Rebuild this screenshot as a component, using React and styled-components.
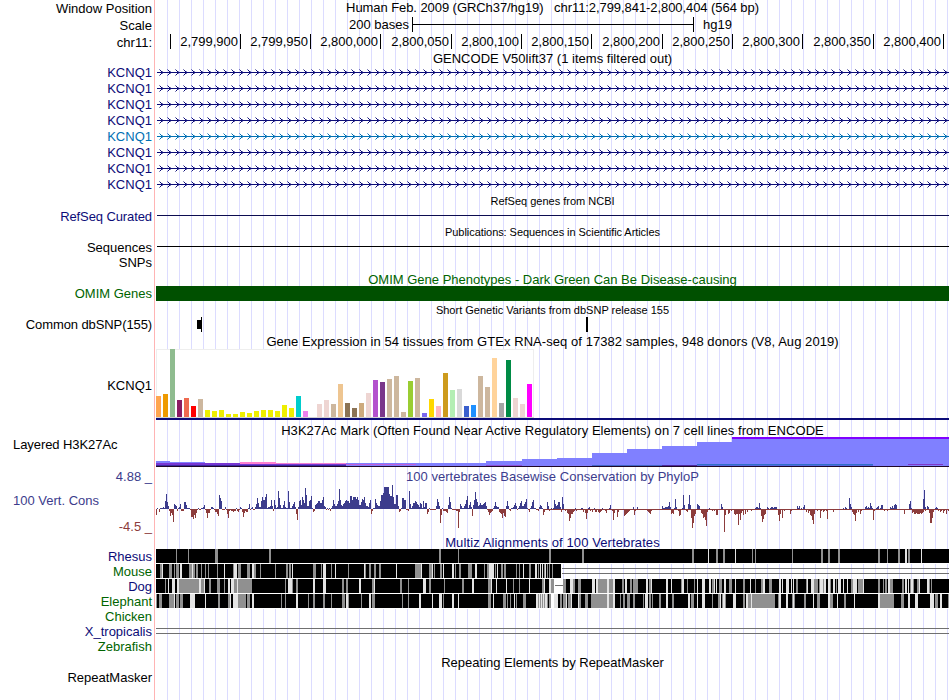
import React from 'react';
import styled, { createGlobalStyle } from 'styled-components';

const NAVY = '#0c0c78';
const GREEN = '#006400';
const INDIGO = '#3c3c8c';
const MAROON = '#8c3c3c';

const GlobalStyle = createGlobalStyle`
  body {
    margin: 0;
    background: #fff;
    overflow: hidden;
  }
`;

const Browser = styled.main`
  width: 950px;
  height: 700px;
  display: flex;
  flex-direction: column;
  overflow: hidden;
  font-family: 'Liberation Sans', Arial, sans-serif;
  font-size: 13px;
  line-height: 15px;
  color: #000;
  white-space: pre;
  background:
    linear-gradient(#ffb4b4, #ffb4b4) 154px 0 / 1px 100% no-repeat,
    repeating-linear-gradient(90deg, #dcdcff 0 1px, transparent 1px 12px) 167px 0 / 782px 100% no-repeat,
    #fff;
`;

const TrackRow = styled.section`
  flex: none;
  display: grid;
  grid-template-columns: 152px 793px;
  column-gap: 4px;
  height: ${(p) => p.$h}px;
`;

const Label = styled.div`
  display: flex;
  align-items: center;
  justify-content: ${(p) => (p.$left ? 'flex-start' : 'flex-end')};
  padding: ${(p) => p.$pad || '0'};
  height: ${(p) => (p.$h ? `${p.$h}px` : '100%')};
  box-sizing: border-box;
  letter-spacing: ${(p) => p.$track || 0}px;
  color: ${(p) => p.$color || '#000'};
`;

const Title = styled.div`
  display: flex;
  align-items: center;
  justify-content: center;
  padding-top: ${(p) => p.$drop || 0}px;
  padding-bottom: ${(p) => p.$lift || 0}px;
  font-size: ${(p) => (p.$small ? 11 : 13)}px;
  letter-spacing: ${(p) => p.$track || 0}px;
  color: ${(p) => p.$color || '#000'};
`;

const Plot = styled.svg`
  display: block;
  width: 793px;
  height: ${(p) => p.$h}px;
  shape-rendering: crispEdges;
`;

const ScaleBar = styled.div`
  display: flex;
  align-items: center;
  padding-left: 193px;
`;

const ScaleName = styled.span`
  width: 59px;
`;

const ScaleRule = styled.div`
  display: flex;
  align-items: center;
  width: 280px;
  height: 15px;
  margin: 0 9px 0 4px;
  border: solid #000;
  border-width: 0 1px;
  &::before {
    content: '';
    flex: 1;
    height: 1px;
    background: #000;
  }
`;

const Ruler = styled.div`
  display: grid;
  grid-template-columns: 15px 70px 70px 70px 71px 70px 70px 71px 70px 70px 71px 70px;
  padding: 1px 0;
`;

const RulerCell = styled.div`
  display: flex;
  align-items: center;
  justify-content: flex-end;
  padding-right: 2px;
  border-right: 1px solid #000;
`;

const Band = styled.div`
  height: 15px;
  background: #005000;
`;

const POSITIONS = ['', '2,799,900', '2,799,950', '2,800,000', '2,800,050', '2,800,100', '2,800,150', '2,800,200', '2,800,250', '2,800,300', '2,800,350', '2,800,400'];

/* Plots share genomic pixel coordinates; column 156 is the left edge. */
const X0 = 156;

const GENES = [NAVY, NAVY, NAVY, NAVY, '#0070b4', NAVY, NAVY, NAVY];

const GTEX = [
  ['#ffa54f', 21], ['#ee9a00', 23], ['#8fbc8f', 68], ['#8b1c62', 17], ['#ee6a50', 19], ['#ff0000', 11], ['#cdb79e', 18],
  ['#eeee00', 7], ['#eeee00', 6], ['#eeee00', 7], ['#eeee00', 3], ['#eeee00', 3], ['#eeee00', 5], ['#eeee00', 4],
  ['#eeee00', 6], ['#eeee00', 7], ['#eeee00', 7], ['#eeee00', 6], ['#eeee00', 12], ['#eeee00', 9], ['#00cdcd', 21],
  ['#ee82ee', 6], ['#9ac0cd', 0], ['#eed5d2', 13], ['#eed5d2', 17], ['#cdb79e', 13], ['#eec591', 33], ['#8b7355', 14],
  ['#8b7355', 9], ['#cdaa7d', 14], ['#eed5d2', 24], ['#b452cd', 37], ['#7a378b', 35], ['#cdb79e', 38], ['#cdb79e', 41],
  ['#cdb79e', 5], ['#9acd32', 36], ['#cdb79e', 39], ['#7a67ee', 4], ['#ffd700', 18], ['#ffb6c1', 11], ['#cd9b1d', 44],
  ['#b4eeb4', 27], ['#d9d9d9', 28], ['#3a5fcd', 11], ['#1e90ff', 12], ['#cdb79e', 41], ['#cdb79e', 30], ['#ffd39b', 59],
  ['#a6a6a6', 14], ['#008b45', 57], ['#eed5d2', 19], ['#eed5d2', 13], ['#ff00ff', 33],
];

/* [x, y, width, height, colour], y measured from the top of the signal. */
const H3K27AC = [
  [156, 24, 14, 5, '#8080ff'], [170, 25, 35, 4, '#8080ff'],
  [156, 26, 84, 2, '#7837d2'], [240, 27, 106, 2, '#7837d2'],
  [240, 25, 36, 2, '#ff80d0'], [276, 26, 70, 1, '#f080d0'], [346, 27, 70, 1, '#c060d8'],
  [346, 26, 140, 1, '#8080ff'], [346, 28, 140, 1, '#8080ff'], [416, 27, 70, 1, '#8080ff'],
  [156, 28, 190, 1, '#3c28a0'],
  [486, 24, 36, 5, '#8080ff'], [522, 22, 35, 7, '#8080ff'], [557, 21, 35, 8, '#8080ff'],
  [592, 16, 35, 13, '#8080ff'], [627, 12, 35, 17, '#8080ff'], [662, 9, 35, 20, '#8080ff'],
  [697, 5, 35, 24, '#8080ff'], [732, 0, 217, 29, '#8080ff'], [732, 0, 217, 2, '#8000ff'],
  [486, 28, 36, 1, '#8c50d8'], [592, 28, 70, 1, '#4064c8'], [662, 28, 35, 1, '#4c289c'],
  [697, 27, 176, 1, '#3070c8'], [697, 28, 176, 1, '#5068e0'], [908, 27, 35, 1, '#8038c8'],
  [156, 29, 793, 1, '#200828'],
];

/* Conservation score runs: "start: heights", signed, one value per column. */
const PHYLOP = `
156: -6 1 0 -3 1 1 1 2 1 8 15 7 3 -2 -7 -4 -6 -13 5 4 3 -2 1 2 5 -2 -2 -2 7 7 4 1 1 1 -1 -8 -8 -10 -6 -9
196: -4 -1 1 -1 -1 1 1 2 4 -1 -4 -9 -4 -4 -1 2 2 1 -1 -3 -3 -5 -7 14 11 8 -1 -1 -1 2 -1 -5 -9 -2 -1 -2 -2 -3 -2 -2
236: 1 -2 -3 -1 2 1 -3 -8 -4 -2 -3 -3 1 5 -1 1 2 -1 -1 2 5 11 6 2 2 8 12 9 9 12 15 1 2 2 3 9
272: 3 -2 9 4 1 2 18 11 4 1 1 4 8 2 1 1 18 7 1 1 3 5 7 2 -5 -11 2 8 9 4 12 9 6 21 14 3
308: 3 8 9 13 1 -3 -2 4 5 6 8 8 6 6 9 12 3 2 -1 1 -1 1 -2 1 3 9 5 3 3 5 8 20 9 4 3 5 6 8 9 8
348: 8 6 13 13 9 12 12 12 10 12 9 4 4 7 10 9 12 6 3 3 2 6 9 -5 -2 1 1 10 6 4 3 3 8 14 14 16 22 22 22 22
388: 22 15 13 13 24 12 5 5 14 14 3 -3 -2 1 11 11 9 9 -1 -1 -2 18 5 1 3 6 6 8 7 5 4 2 6 5 1 8
424: 2 6 6 -5 -3 1 -1 -1 -1 -1 -1 -1 3 10 7 3 -14 -6 1 -2 -2 -2 -3 -4 4 12 7 1 -1 -1 -1 -1 -2 -2 -19 -3
460: 5 3 1 1 3 5 9 13 1 4 7 2 -7 4 9 17 10 7 3 4 6 4 4 5 6 7 3 -1 -3 -6 -4 -3 -2 1 3 7
496: 3 2 2 -3 -4 -5 -9 -4 -7 -8 3 8 3 -1 -2 1 1 2 4 6 3 -1 1 3 6 8 3 3 5 7 10 1 -1 -3 1 3
532: 7 9 1 1 -1 -1 -2 2 4 3 1 -6 -3 -1 -1 7 3 -2 -1 1 0 1 9 5 3 4 7 7 2 -3 12 5 0 -2 0 -4
568: -5 -12 -9 -5 -5 -3 -2 1 -2 -1 -1 0 -1 1 1 -3 -1 -4 -10 -4 1 2 -2 -1 -3 -1 1 -3 -3 -1 -3 -4 -3 -2 1 -1
604: -1 -2 -4 -1 0 1 4 -1 -2 -11 -4 -1 -1 -8 -3 0 -1 -1 -1 0 -7 -6 -5 -4 -3 -2 -1 0 -1 2 -6 -2 0 2 -1 -1
640: -1 -1 -1 -1 -1 -1 -1 -2 -3 -4 -5 -2 0 -1 -1 0 -1 -1 -1 -1 -1 0 3 1 1 2 2 2 3 7 2 -5 -4 -5 1 10
676: 2 0 -2 -7 -6 -1 1 14 4 -1 -2 -3 5 14 4 -9 -19 -14 -7 -5 0 5 4 3 -1 -4 -5 -9 -8 -11 -17 -3 0 1 -1 -1
712: -2 -1 -2 -1 -6 -6 -1 0 -1 5 2 -1 -23 -6 -1 -1 -5 -4 -1 -2 -1 -1 -5 -6 -5 -5 -16 -5 -11 -4 -2 -6 0 -5 -1 -3
748: -1 0 -1 -2 -1 -1 -1 1 2 2 1 6 1 -7 -13 -10 -6 -5 0 2 1 0 1 2 2 1 2 2 2 -1 -6 -12 -5 0 -9 -1
784: -2 -1 -1 0 -1 -1 -5 -2 -1 0 -1 -1 0 3 1 3 0 1 0 2 4 -1 -3 -1 -4 -2 -6 -7 -11 -15 -5 -1 0 -2 -1 -1
820: -9 -2 -1 -3 -2 -1 -2 -10 -1 0 -1 -1 -1 -3 -1 -1 -1 -1 0 -1 -1 -1 -1 1 -1 2 1 -1 0 11 5 2 -3 -5 -6 -12
856: -4 -1 -3 -1 -5 -2 -1 0 -1 2 3 1 2 1 6 3 1 -11 -2 -1 1 2 3 -1 1 4 4 0 -2 -1 0 -2 -1 0 2 1
892: 3 1 4 5 4 -1 -1 -1 -1 -1 -1 0 -5 -1 -1 0 -1 5 8 1 -4 -3 -5 -5 -4 -5 -5 -5 -4 -5 -4 -3 0 -2
923: 10 19 2 -1 3 2 -4 -14 -14 -9 -3 -1 1 2 1 -2 -1 -3 -2 -1 -4 -2 -1 -5 -1 -2
`;

const scores = PHYLOP.trim()
  .split('\n')
  .flatMap((line) => {
    const [start, values] = line.split(': ');
    return values.split(' ').map((v, i) => [+start + i, +v]);
  });

const barsPath = (list) => list.map(([x, v]) => `M${x} 24v${-v}h1v${v}z`).join('');

/* Mismatch stripes: position, shade (g grey, l light, w gap, k match), width. */
const SHADES = { g: '#909090', l: '#e4e4e4', w: '#ffffff', k: '#000000' };
const RHESUS = '176g1 188g1 215g3 269g2 439g2 458g1 549g2 582g2 692g2 708l1 716g2 723g2 735l1 752g1 755g1 792g1 821g2 828g2 838g2 878g2 887g1 898g2 905l2 908g2 921l1';
const MOUSE = '160g2 162l1 169g3 174g1 176g3 180l2 189g3 192l1 193g2 196g2 201g1 205g1 208g1 217g1 224l1 233g1 234l3 238g3 247g3 252l2 254g2 260g1 275g1 286g2 289g2 292l1 313g3 321g1 323l3 331g1 335l1 348g1 364l1 365g1 369g2 374g2 379g2 396l1 415g6 421l1 429g3 432l1 434g1 440g2 443l1 452l2 455g1 459g2 468g4 475l2 484g1 487g2 489l5 495g1 497l1 501g2 504g2 516g1 519g1 523l1 529g2 535l2 538g1 540l1 542l1 544g1 545l1 547g1 549g1 552g1';
const DOG = '165g1 168l1 172l3 177l2 179g20 199l2 201g3 204l1 209g2 217g3 224g1 228l2 231l3 234g3 237l1 238g14 285g1 288l4 292g1 296g2 313l2 323l3 342g2 346g2 359l2 372g2 374l1 400g2 408g1 423l3 429g2 444g1 462g2 472l2 488g3 491l1 496l1 506l1 513g1 519g1 529l1 542g2 544l1 549l2 551g3 554w9 563g3 570l3 573g2 578g3 592l3 596l2 598g9 607l2 609g4 613l2 622g2 625l2 630g2 633g5 646l2 649g2 651l1 666l2 671l1 681g1 682l2 687g1 694g1 697l1 702l3 709l2 712g2 714l1 716l1 719g3 724l2 729g3 735l1 743g2 750l1 755g1 761g2 763l2 769g3 779l2 782l1 786l3 791l1 793l1 796g2 806g1 807l1 811l3 814g4 819g1 820l3 823g1 824l2 828l2 830g1 833l2 836g1 838l3 843l1 847l1 851g2 853l4 858g5 863l1 878g2 883g1 885g2 888l2 890g3 902g2 905l2 908l1 910g1 911l2 913g1 917g2 919l1 927l2 929g1 931g1';
const ELEPHANT = '156g1 159g3 169g5 174l1 176g3 180g3 190l5 205l1 218g2 228g2 230l1 233l5 238g8 247g3 252l2 281g1 285g1 296l2 308g1 313g2 323g2 331g1 342g3 346l2 348g1 361g1 369l2 372g3 402g1 408g1 419l2 432l1 439l3 443g1 452l2 458l1 488g3 493l1 503g3 507g1 510g1 514l1 516g1 523g3 536g12 536l2 539l1 541l1 543l1 545l2 549g2 551w3 554l4 560g2 563g4 566l1 568g3 571l1 578l1 579g2 585g3 591g16 607l2 609g4 613l2 620g1 623g2 627g3 633g2 643g1 645l3 649g2 652g1 659g2 666l2 672g2 688l2 691g3 697l1 702l3 712g1 718g2 720l1 722g1 723l2 725g1 733l3 743g2 746l2 748g3 751l1 752g23 778g1 779l2 786l2 792g1 793l1 794g1 804g2 813l1 817g3 828l2 830g3 837l1 844g2 854l1 878l2 880g14 901g3 908l2 915l3 930l4 935g3 940l2 948g1';

const parseStripes = (text) => text.split(' ').map((s) => s.match(/(\d+)([glwk])(\d+)/).slice(1));

const TrackPlot = ({ h, children }) => (
  <Plot $h={h} viewBox={`${X0} 0 793 ${h}`}>
    {children}
  </Plot>
);

const TitleRow = ({ h, label, labelColor, children, ...rest }) => (
  <TrackRow $h={h}>
    <Label $color={labelColor}>{label}</Label>
    <Title {...rest}>{children}</Title>
  </TrackRow>
);

const chevrons = Array.from({ length: 99 }, (_, i) => 162 + i * 8);

const GeneTrack = ({ color }) => (
  <TrackRow $h={16}>
    <Label $color={color} $pad="0 0 2px">KCNQ1</Label>
    <TrackPlot h={16}>
      <rect x="157" y="7" width="792" height="1" fill={color} />
      <path d={chevrons.map((x) => `M${x} 7h1v1h-1zM${x - 1} 6h1v3h-1zM${x - 2} 5h1v1h-1zM${x - 2} 9h1v1h-1z`).join('')} fill={color} />
      <path d={chevrons.map((x) => `M${x - 3} 4h1v1h-1zM${x - 3} 10h1v1h-1zM${x} 6h1v1h-1zM${x} 8h1v1h-1z`).join('')} fill={color} opacity="0.5" />
    </TrackPlot>
  </TrackRow>
);

const LineTrack = ({ label, color, line, track }) => (
  <TrackRow $h={14}>
    <Label $color={color} $track={track} $pad="0 0 3px">{label}</Label>
    <TrackPlot h={14}>
      <rect x="157" y="6" width="792" height="1" fill={line} />
    </TrackPlot>
  </TrackRow>
);

const Gap = ({ from }) => (
  <path d={`M${from} 4H949v1H${from}zM${from} 9H949v1H${from}z`} fill="#707070" />
);

const AlignTrack = ({ label, color, end, stripes, children }) => (
  <TrackRow $h={15}>
    <Label $color={color}>{label}</Label>
    <TrackPlot h={15}>
      {stripes && <rect x="156" width={end - 156} height="15" fill="#fff" />}
      {stripes && <rect x="156" width={end - 156} height="14" />}
      {stripes && parseStripes(stripes).map(([x, s, w], i) => <rect key={i} x={x} width={w} height="14" fill={SHADES[s]} />)}
      {children}
    </TrackPlot>
  </TrackRow>
);

export default function App() {
  return (
    <>
      <GlobalStyle />
      <Browser>
        <TitleRow h={16} label="Window Position" $track={-0.07} $lift={2}>
          {'Human Feb. 2009 (GRCh37/hg19)   chr11:2,799,841-2,800,404 (564 bp)'}
        </TitleRow>
        <TrackRow $h={17}>
          <Label $pad="1px 0 0">Scale</Label>
          <ScaleBar>
            <ScaleName>200 bases</ScaleName>
            <ScaleRule />
            <span>hg19</span>
          </ScaleBar>
        </TrackRow>
        <TrackRow $h={17}>
          <Label $pad="1px 0 0">chr11:</Label>
          <Ruler>
            {POSITIONS.map((p, i) => (
              <RulerCell key={i}>{p}</RulerCell>
            ))}
          </Ruler>
        </TrackRow>
        <TitleRow h={15} $drop={1} $track={0.02}>GENCODE V50lift37 (1 items filtered out)</TitleRow>
        {GENES.map((c, i) => (
          <GeneTrack key={i} color={c} />
        ))}
        <TitleRow h={16} $small>RefSeq genes from NCBI</TitleRow>
        <LineTrack label="RefSeq Curated" color={NAVY} line="#0c0c50" track={-0.1} />
        <TitleRow h={17} $small $drop={2} $track={-0.06}>Publications: Sequences in Scientific Articles</TitleRow>
        <LineTrack label="Sequences" line="#000" />
        <TrackRow $h={17}>
          <Label>SNPs</Label>
        </TrackRow>
        <TitleRow h={15} $color={GREEN} $drop={1}>OMIM Gene Phenotypes - Dark Green Can Be Disease-causing</TitleRow>
        <TrackRow $h={15}>
          <Label $color={GREEN}>OMIM Genes</Label>
          <Band />
        </TrackRow>
        <TitleRow h={16} $small $drop={2}>Short Genetic Variants from dbSNP release 155</TitleRow>
        <TrackRow $h={15}>
          <Label $track={-0.1}>Common dbSNP(155)</Label>
          <TrackPlot h={15}>
            <path d="M197 3h4v9h-4zM201 0h1v15h-1zM586 0h2v15h-2z" />
          </TrackPlot>
        </TrackRow>
        <TitleRow h={17} $drop={2} $track={0.055}>Gene Expression in 54 tissues from GTEx RNA-seq of 17382 samples, 948 donors (V8, Aug 2019)</TitleRow>
        <TrackRow $h={71}>
          <Label $pad="2px 0 0">KCNQ1</Label>
          <TrackPlot h={71}>
            <rect x="156" width="378" height="69" fill="#eee" />
            <rect x="157" y="1" width="376" height="67" fill="#fff" />
            <rect x="156" y="68" width="378" height="1" fill="#d0d0d0" />
            {GTEX.map(([c, v], i) => (
              <rect key={i} x={156 + i * 7} y={68 - v} width="5" height={v} fill={c} />
            ))}
            <rect x="156" y="69" width="793" height="2" fill={NAVY} />
          </TrackPlot>
        </TrackRow>
        <TitleRow h={17} $drop={3} $track={0.06}>H3K27Ac Mark (Often Found Near Active Regulatory Elements) on 7 cell lines from ENCODE</TitleRow>
        <TrackRow $h={30}>
          <Label $left $track={-0.07} $pad="0 0 16px 13px">Layered H3K27Ac</Label>
          <TrackPlot h={30}>
            {H3K27AC.map(([x, y, w, h, c], i) => (
              <rect key={i} x={x} y={y} width={w} height={h} fill={c} />
            ))}
          </TrackPlot>
        </TrackRow>
        <TitleRow h={18} label="4.88 _" labelColor={INDIGO} $color={INDIGO} $drop={1} $track={0.02}>100 vertebrates Basewise Conservation by PhyloP</TitleRow>
        <TrackRow $h={50}>
          <div>
            <Label $h={32} $left $pad="0 0 2px 13px" $color={INDIGO}>100 Vert. Cons</Label>
            <Label $h={18} $color={MAROON}>-4.5 _</Label>
          </div>
          <TrackPlot h={50}>
            <rect x="543" y="24" width="406" height="1" fill={MAROON} />
            <path d={barsPath(scores.filter(([, v]) => v > 0))} fill={INDIGO} />
            <path d={barsPath(scores.filter(([, v]) => v < 0))} fill={MAROON} />
          </TrackPlot>
        </TrackRow>
        <TitleRow h={14} $color={NAVY} $lift={1} $track={0.1}>Multiz Alignments of 100 Vertebrates</TitleRow>
        <AlignTrack label="Rhesus" color={NAVY} end={949} stripes={RHESUS} />
        <AlignTrack label="Mouse" color={GREEN} end={561} stripes={MOUSE}>
          <rect x="561" width="1" height="14" fill="#fff" />
          <Gap from={562} />
        </AlignTrack>
        <AlignTrack label="Dog" color={NAVY} end={949} stripes={DOG}>
          <rect x="555" y="6" width="8" height="1" fill="#707070" />
        </AlignTrack>
        <AlignTrack label="Elephant" color={GREEN} end={949} stripes={ELEPHANT} />
        <AlignTrack label="Chicken" color={GREEN} />
        <AlignTrack label="X_tropicalis" color={NAVY}>
          <Gap from={156} />
        </AlignTrack>
        <AlignTrack label="Zebrafish" color={GREEN} />
        <TitleRow h={16}>Repeating Elements by RepeatMasker</TitleRow>
        <TrackRow $h={15}>
          <Label $pad="0 0 3px">RepeatMasker</Label>
        </TrackRow>
      </Browser>
    </>
  );
}
